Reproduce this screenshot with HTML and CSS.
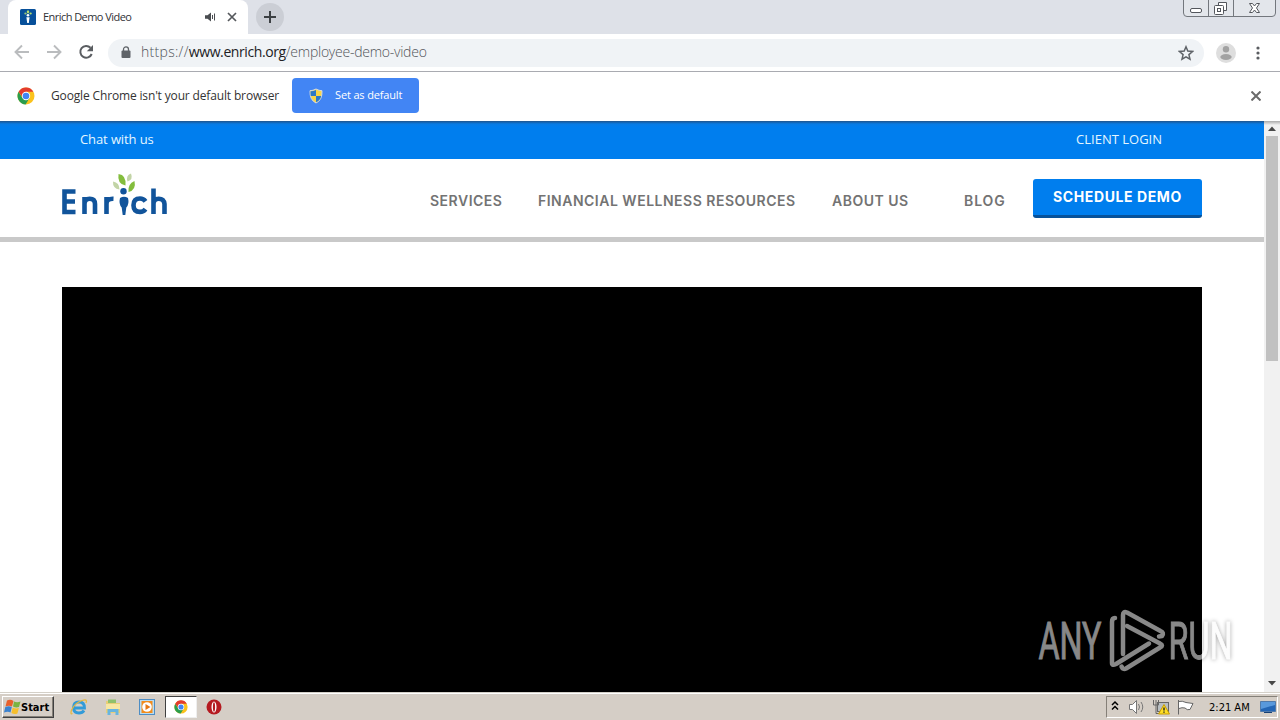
FILE: index.html
```
<!DOCTYPE html>
<html lang="en">
<head>
  <meta charset="UTF-8" />
  <title>Enrich Demo Video</title>
  <link rel="stylesheet" href="styles.css">
</head>
<body>
  <svg class="defs" width="0" height="0">
    <symbol id="chrome" viewBox="0 0 18 18">
      <circle cx="9" cy="9" r="8.500" fill="#fbc21c"/>
      <path d="M1.600 4.800A8.500 8.500 0 0 0 8.600 17.500L12.500 11 9 9 5.500 11z" fill="#2a9d4d"/>
      <path d="M1.600 4.800A8.500 8.500 0 0 1 16.400 4.800H9L5.300 10z" fill="#e33b2e"/>
      <circle cx="9" cy="9" r="4.200" fill="#fff"/>
      <circle cx="9" cy="9" r="3.300" fill="#4285f4"/>
    </symbol>
  </svg>

  <div class="tabstrip">
    <div class="tab">
      <svg class="favicon" width="16" height="16" viewBox="0 0 16 16">
        <rect width="16" height="16" rx="1.500" fill="#07509a"/>
        <ellipse cx="8" cy="2.800" rx="1.200" ry="1.600" fill="#b5dc6c"/>
        <ellipse cx="5.500" cy="4.500" rx="1.200" ry="1" fill="#9ac77b"/>
        <ellipse cx="10.600" cy="4.400" rx="1.200" ry="1" fill="#b5dc6c"/>
        <circle cx="8" cy="6.300" r="1.300" fill="#fff"/>
        <path d="M6.400 8.200h3.200L8.800 14H7.200z" fill="#fff"/>
      </svg>
      <span class="tab-title">Enrich Demo Video</span>
      <svg class="tab-sound" width="12" height="10" viewBox="0 0 12 10">
        <path d="M0 3.300h2.500L6 .5v9L2.500 6.700H0z" fill="#4a4d51"/>
        <path d="M7.500 3v4M9.500 1.500v7" stroke="#4a4d51" fill="none"/>
      </svg>
      <svg class="tab-close" width="10" height="10" viewBox="0 0 10 10"><path d="M1 1l8 8M9 1L1 9" stroke="#55585c" stroke-width="1.700"/></svg>
    </div>
    <div class="new-tab">
      <svg width="12" height="12" viewBox="0 0 12 12"><path d="M6 0v12M0 6h12" stroke="#3c4043" stroke-width="2"/></svg>
    </div>
    <svg class="window-controls" width="93" height="17" viewBox="0 0 93 17">
      <path d="M.5 0v13q0 3.500 3.500 3.500h85q3.500 0 3.500-3.500V0M25.500 0v16M50.500 0v16" fill="#e3e6eb" stroke="#73777d"/>
      <rect x="7.500" y="8.500" width="11" height="4" rx="1.500" fill="#fff" stroke="#53565c"/>
      <path d="M35.500 5V2.500h8v8H41" fill="#fff" stroke="#53565c"/>
      <rect x="31.500" y="5.500" width="9" height="9" rx="1" fill="#fff" stroke="#53565c"/>
      <rect x="34.500" y="8.500" width="3" height="3" fill="#fff" stroke="#53565c"/>
      <path d="M66.500 3.500h3l2 2.500 2-2.500h3L73.500 8l3 4.500h-3l-2-2.500-2 2.500h-3l3-4.500z" fill="#fff" stroke="#53565c"/>
    </svg>
  </div>

  <div class="toolbar">
    <svg width="108" height="37" viewBox="0 0 108 37" fill="none">
      <path d="M29 18H16M22 11.500L15.500 18l6.500 6.500" stroke="#babcbe" stroke-width="1.900"/>
      <path d="M47 18h13M54 11.500l6.500 6.500-6.500 6.500" stroke="#babcbe" stroke-width="1.900"/>
      <path d="M90.500 13.700A5.900 5.900 0 1 0 91.700 20" stroke="#5a5d61" stroke-width="2"/>
      <path d="M93 11v6.200h-6.200z" fill="#5a5d61"/>
    </svg>
    <div class="omnibox">
      <svg width="10" height="13" viewBox="0 0 10 13">
        <rect x=".5" y="4.500" width="9" height="7.500" rx="1" fill="#5f6368"/>
        <path d="M2.500 5V3.400a2.500 2.500 0 0 1 5 0V5" fill="none" stroke="#5f6368" stroke-width="1.300"/>
      </svg>
      <span class="url"><i>https://</i><b>www.enrich.org</b>/employee-demo-video</span>
      <svg class="star" width="16" height="16" viewBox="0 0 16 16"><path d="M8 1.800l1.800 4.300 4.700.4-3.600 3.100 1.100 4.600L8 11.800l-4 2.400 1.100-4.600L1.500 6.500l4.700-.4z" fill="none" stroke="#5f6368" stroke-width="1.500"/></svg>
    </div>
    <svg class="avatar" width="20" height="20" viewBox="0 0 20 20">
      <circle cx="10" cy="10" r="10" fill="#dedede"/>
      <circle cx="10" cy="6.300" r="3.200" fill="#a2a2a2"/>
      <ellipse cx="10" cy="14" rx="5.700" ry="2.900" fill="#a2a2a2"/>
    </svg>
    <svg class="menu" width="4" height="14" viewBox="0 0 4 14" fill="#5a5d61"><circle cx="2" cy="2" r="1.600"/><circle cx="2" cy="7" r="1.600"/><circle cx="2" cy="12" r="1.600"/></svg>
  </div>

  <div class="infobar">
    <svg width="18" height="18"><use href="#chrome"/></svg>
    <span class="infobar-text">Google Chrome isn't your default browser</span>
    <button class="set-default">
      <svg width="14" height="16" viewBox="0 0 14 16">
        <path d="M7 1q3 1.700 6 1.700Q13.500 12 7 15 .5 12 1 2.700 4 2.700 7 1z" fill="#f8d548" stroke="#d5dbe0"/>
        <path d="M7 2v6H1.800Q1.500 6 1.500 3.300 4.500 3.200 7 2zM7 8h5.200Q11.300 12.600 7 14.300z" fill="#2c78c8"/>
      </svg>
      <span>Set as default</span>
    </button>
    <svg class="infobar-close" width="10" height="10" viewBox="0 0 10 10"><path d="M.5.500l9 9M9.500.500l-9 9" stroke="#6b6b6b" stroke-width="2"/></svg>
  </div>

  <div class="viewport">
    <div class="page">
      <div class="topbar">
        <a class="chat">Chat with us</a>
        <a class="login">CLIENT LOGIN</a>
      </div>
      <div class="header">
        <svg class="logo" width="108" height="46" viewBox="0 0 108 46" fill="none" stroke="#11549b" stroke-width="4.600">
          <path d="M14.500 18.500H3.500V39h11M3.500 28.500h10.500"/>
          <path d="M23.500 41V24M23.500 31q0-5.200 5.200-5.200T34 31v10"/>
          <path d="M45.500 41V24M45.500 31q0-5.500 7-5.200"/>
          <path d="M84.500 28.300q-2-2.800-5.500-2.800-6.500 0-6.500 6.700t6.500 6.700q3.500 0 5.500-2.800"/>
          <path d="M92.500 41V15.500M92.500 31q0-5.200 5.200-5.200T103.500 31v10"/>
          <g stroke="none">
            <circle cx="62.500" cy="18.300" r="3.200" fill="#11549b"/>
            <path d="M59 25q4-2.500 8 0 1.500 6-1.700 9.500L64.300 42h-2.600l-1-7.500Q57.500 31 59 25z" fill="#11549b"/>
            <path d="M57.500 1q8 1 7 11.500Q56 11 57.500 1z" fill="#83bd3d"/>
            <path d="M73.500 8q2 9-6 11-1-8 6-11z" fill="#83bd3d"/>
            <path d="M70 .5q2.500 6-3.500 8Q64.500 2.500 70 .5z" fill="#c2d4a6"/>
            <path d="M52 8.500q6.500 1 6.500 8-7-1-6.500-8z" fill="#c2d4a6"/>
          </g>
        </svg>
        <div class="nav">
          <a class="services">SERVICES</a>
          <a class="resources">FINANCIAL WELLNESS RESOURCES</a>
          <a class="about">ABOUT US</a>
          <a class="blog">BLOG</a>
        </div>
        <a class="demo">SCHEDULE DEMO</a>
      </div>
      <div class="video"></div>
    </div>
    <div class="scrollbar">
      <svg width="16" height="15" viewBox="0 0 16 15"><path d="M4 10l4-4.500 4 4.500z" fill="#484848"/></svg>
      <div class="thumb"></div>
      <svg class="down" width="16" height="17" viewBox="0 0 16 17"><path d="M4 6l4 4.500L12 6z" fill="#484848"/></svg>
    </div>
    <svg class="watermark" width="204" height="66" viewBox="0 0 204 66">
      <defs>
        <linearGradient id="fade" gradientUnits="userSpaceOnUse" x1="0" y1="0" x2="200" y2="0">
          <stop offset=".83" stop-color="#888"/>
          <stop offset=".83" stop-color="#fcfcfc"/>
        </linearGradient>
      </defs>
      <g class="watermark-text">
        <text x="2.500" y="51" textLength="63" lengthAdjust="spacingAndGlyphs" fill="#888" stroke="#888">ANY</text>
        <text class="shade" x="132.500" y="51" textLength="64" lengthAdjust="spacingAndGlyphs" fill="url(#fade)" stroke="url(#fade)">RUN</text>
      </g>
      <g fill="none" stroke="#888" stroke-width="4.500" stroke-linecap="round" stroke-linejoin="round">
        <path d="M79 10q-3 0-3 4v41q0 3 4 1L113 35.500"/>
        <path d="M87 46V7q0-4 4-2.500L124.500 23q4 2 1.500 5l-3 .5"/>
        <path d="M91 18l33 17.500q4 2 0 4L90 60.500q-3 1.500-4.500-2"/>
      </g>
    </svg>
  </div>

  <div class="taskbar">
    <div class="start">
      <svg width="17" height="16" viewBox="0 0 17 16">
        <path d="M3 1.500q3.500-1.500 6.500.5L8 7.500Q5 5.800 1.500 7.500z" fill="#e8602c"/>
        <path d="M10 2.500q3 1.500 6.500 0L15 8q-3 1-6-.5z" fill="#7ab342"/>
        <path d="M1.300 8q3.500-1.500 6.500 0L6.500 13.500Q4 12 0 13.500z" fill="#3b82cf"/>
        <path d="M8.700 8.500q3 1.500 6.200.5l-1.500 5.500q-3 1.300-6-.5z" fill="#f6bf2d"/>
      </svg>
      <span>Start</span>
    </div>
    <div class="quick">
      <svg width="18" height="18" viewBox="0 0 18 18" fill="none">
        <path d="M14 12.500Q12.500 15 9 15q-5.500 0-5.500-5.500T9 4q5.500 0 5.500 6h-10" stroke="#329bd8" stroke-width="2.800"/>
        <path d="M2.500 15.500Q0 17 1.500 12 5 5 12 2.500q6-2 4 2.500" stroke="#e6b840" stroke-width="1.300"/>
      </svg>
      <svg width="18" height="18" viewBox="0 0 18 18">
        <path d="M2 3h5l1 2h8v10H2z" fill="#e9ce77"/>
        <path d="M4 1.500h8V5H4z" fill="#8fc16b"/>
        <path d="M2 6h14v5H2z" fill="#f7e7a4"/>
        <path d="M3.500 17v-6h11v6h-3v-3h-5v3z" fill="#68b5df"/>
      </svg>
      <svg width="18" height="18" viewBox="0 0 18 18">
        <rect x="1.500" y="1.500" width="15" height="15" fill="#b9dcf1" stroke="#4d8dc4"/>
        <rect x="3.500" y="3" width="11" height="12" fill="#f28c1c"/>
        <circle cx="9" cy="9" r="4.800" fill="#fff"/>
        <path d="M7.500 6l5 3-5 3z" fill="#e77813"/>
      </svg>
      <div class="active"><svg width="14" height="14"><use href="#chrome"/></svg></div>
      <svg width="16" height="16" viewBox="0 0 16 16">
        <circle cx="8" cy="8" r="7.500" fill="#b51a20"/>
        <ellipse cx="8" cy="8" rx="2.500" ry="5.500" fill="#fff"/>
        <ellipse cx="8" cy="8" rx="1.100" ry="4.700" fill="#b51a20"/>
      </svg>
    </div>
    <div class="tray">
      <svg width="90" height="18" viewBox="0 0 90 18" fill="none">
        <path d="M5 7l3-3 3 3M5 11.500l3-3 3 3" stroke="#000" stroke-width="1.500"/>
        <path d="M22.500 6.500h3l4-4v13l-4-4h-3z" fill="#fff" stroke="#767676"/>
        <path d="M31.500 6q2 3 0 6M34 4q3.500 5 0 10" stroke="#777"/>
        <rect x="50.500" y="4.500" width="11" height="9" fill="#b8bec2" stroke="#666"/>
        <path d="M46.500 2v5h5V2M49 2v13.500h5" stroke="#666"/>
        <path d="M57 6.500l5.500 9.500h-11z" fill="#ffdf25" stroke="#c99d00"/>
        <path d="M57 9.500v3M57 13.500v1.200" stroke="#222" stroke-width="1.400"/>
        <path d="M71.500 2v14.500M72 3.500q3-1 7 1l7 1-3 6q-3 1-5-1.500-3-.8-6 .5" fill="#fff" stroke="#666"/>
      </svg>
      <span class="clock">2:21 AM</span>
      <svg width="17" height="16" viewBox="0 0 17 16">
        <path d="M.5 2.500h15v10H.5z" fill="#2466b5" stroke="#517aaa"/>
        <path d="M1 3h14v3L1 10z" fill="#5999dc"/>
        <path d="M4 13.500h8" stroke="#174176"/>
      </svg>
    </div>
  </div>
</body>
</html>
```
FILE: styles.css
```
* { box-sizing: border-box; }
body {
  margin: 0;
  height: 720px;
  overflow: hidden;
  display: flex;
  flex-direction: column;
  font-family: "Open Sans", "Noto Sans", sans-serif;
  background: #fff;
}
svg { display: block; flex: none; }
span, a { white-space: nowrap; }
.defs { position: absolute; }

/* browser window */
.tabstrip {
  height: 34px;
  flex: none;
  display: flex;
  background: #dee1e8;
}
.tab {
  width: 240px;
  margin-left: 8px;
  padding: 0 11px 0 12px;
  display: flex;
  align-items: center;
  background: #fff;
  border-radius: 8px 8px 0 0;
}
.tab-title {
  width: 162px;
  margin: -2px 0 0 7px;
  font-size: 11px;
  letter-spacing: -0.55px;
  color: #303236;
}
.tab-close { margin-left: auto; }
.new-tab {
  width: 28px;
  height: 28px;
  margin: 3px 0 0 8px;
  display: flex;
  align-items: center;
  justify-content: center;
  border-radius: 50%;
  background: #cbced5;
}
.window-controls { margin: 0 4px 0 auto; }
.toolbar {
  height: 38px;
  flex: none;
  display: flex;
  align-items: center;
  border-bottom: 1px solid #a9abb1;
}
.omnibox {
  width: 1096px;
  height: 28px;
  padding: 0 10px 0 13px;
  display: flex;
  align-items: center;
  border-radius: 14px;
  background: #f0f3f6;
}
.url {
  margin: -2px 0 0 10px;
  font-size: 14px;
  font-weight: 300;
  color: #505459;
  letter-spacing: -0.25px;
}
.url i { font-style: normal; letter-spacing: 0.3px; }
.url b { font-weight: 400; color: #202124; letter-spacing: -0.4px; }
.star { margin-left: auto; }
.avatar { margin-left: 12px; }
.menu { margin-left: 20px; }
.infobar {
  height: 49px;
  flex: none;
  padding: 0 19px 2px 17px;
  display: flex;
  align-items: center;
}
.infobar-text {
  width: 241px;
  margin-left: 16px;
  font-size: 12px;
  letter-spacing: -0.15px;
  color: #333;
}
.set-default {
  width: 127px;
  height: 35px;
  padding: 0 0 0 17px;
  display: flex;
  align-items: center;
  gap: 12px;
  border: 0;
  border-radius: 4px;
  background: #4285f4;
  color: #fff;
  font: 11px "Open Sans", sans-serif;
  letter-spacing: -0.15px;
}
.set-default span { margin-top: -2px; }
.infobar-close { margin-left: auto; }

/* web page */
.viewport {
  position: relative;
  height: 571px;
  flex: none;
  display: flex;
}
.page { width: 1264px; overflow: hidden; }
.topbar {
  height: 38px;
  padding: 0 102px 2px 80px;
  display: flex;
  justify-content: space-between;
  align-items: center;
  background: linear-gradient(#20548b, #087be4 3px, #007eee 6px);
  color: #e4f6ff;
  font-size: 13px;
}
.chat { letter-spacing: -0.1px; }
.header {
  height: 83px;
  padding: 14px 62px 0 61px;
  display: flex;
  border-bottom: 5px solid #c9c9c9;
}
.nav {
  display: flex;
  width: 603px;
  margin: 19px 0 0 261px;
  font: 600 14px/18px Inter, sans-serif;
  letter-spacing: 0.5px;
  color: #737373;
}
.services { width: 108px; }
.resources { width: 294px; }
.about { width: 132px; }
.blog { letter-spacing: 0.9px; }
.demo {
  width: 169px;
  height: 39px;
  margin-top: 6px;
  background: #007eee;
  border-bottom: 3px solid #07529a;
  border-radius: 3px;
  color: #fff;
  font: 700 14px/36px Inter, sans-serif;
  letter-spacing: 0.6px;
  text-align: center;
}
.video { height: 405px; margin: 45px 62px 0; background: #000; }
.scrollbar {
  width: 16px;
  background: linear-gradient(#aaa, #f1f1f1 4px);
  display: flex;
  flex-direction: column;
}
.thumb { width: 12px; height: 225px; margin-left: 2px; background: #c1c1c1; }
.down { margin-top: auto; }
.watermark { position: absolute; left: 1036px; top: 487px; }
.watermark-text { font: 400 51px Roboto, sans-serif; }
.shade { filter: drop-shadow(0 0 2px rgba(0,0,0,0.35)); }

/* taskbar */
.taskbar {
  height: 28px;
  display: flex;
  align-items: center;
  padding: 1px 2px 0 2px;
  border-top: 1px solid #d4d0c8;
  box-shadow: inset 0 1px #fff;
  background: #d5cec6;
}
.start {
  width: 52px;
  height: 22px;
  padding-left: 1px;
  display: flex;
  align-items: center;
  border: 1px solid;
  border-color: #fff #404040 #404040 #fff;
  box-shadow: inset -1px -1px #858078;
  font: bold 11px "DejaVu Sans Condensed", sans-serif;
}
.quick {
  margin-left: 16px;
  display: flex;
  align-items: center;
  gap: 16px;
}
.active {
  width: 32px;
  height: 22px;
  margin: 0 -7px 0 -7px;
  display: flex;
  align-items: center;
  justify-content: center;
  background: #fff;
  border: 1px solid;
  border-color: #404040 #eee #eee #404040;
}
.tray {
  width: 172px;
  height: 22px;
  margin-left: auto;
  display: flex;
  align-items: center;
  border: 1px solid;
  border-color: #858078 #fff #fff #858078;
}
.clock {
  width: 51px;
  margin-left: 12px;
  font: 11px "DejaVu Sans Condensed", sans-serif;
}
```
